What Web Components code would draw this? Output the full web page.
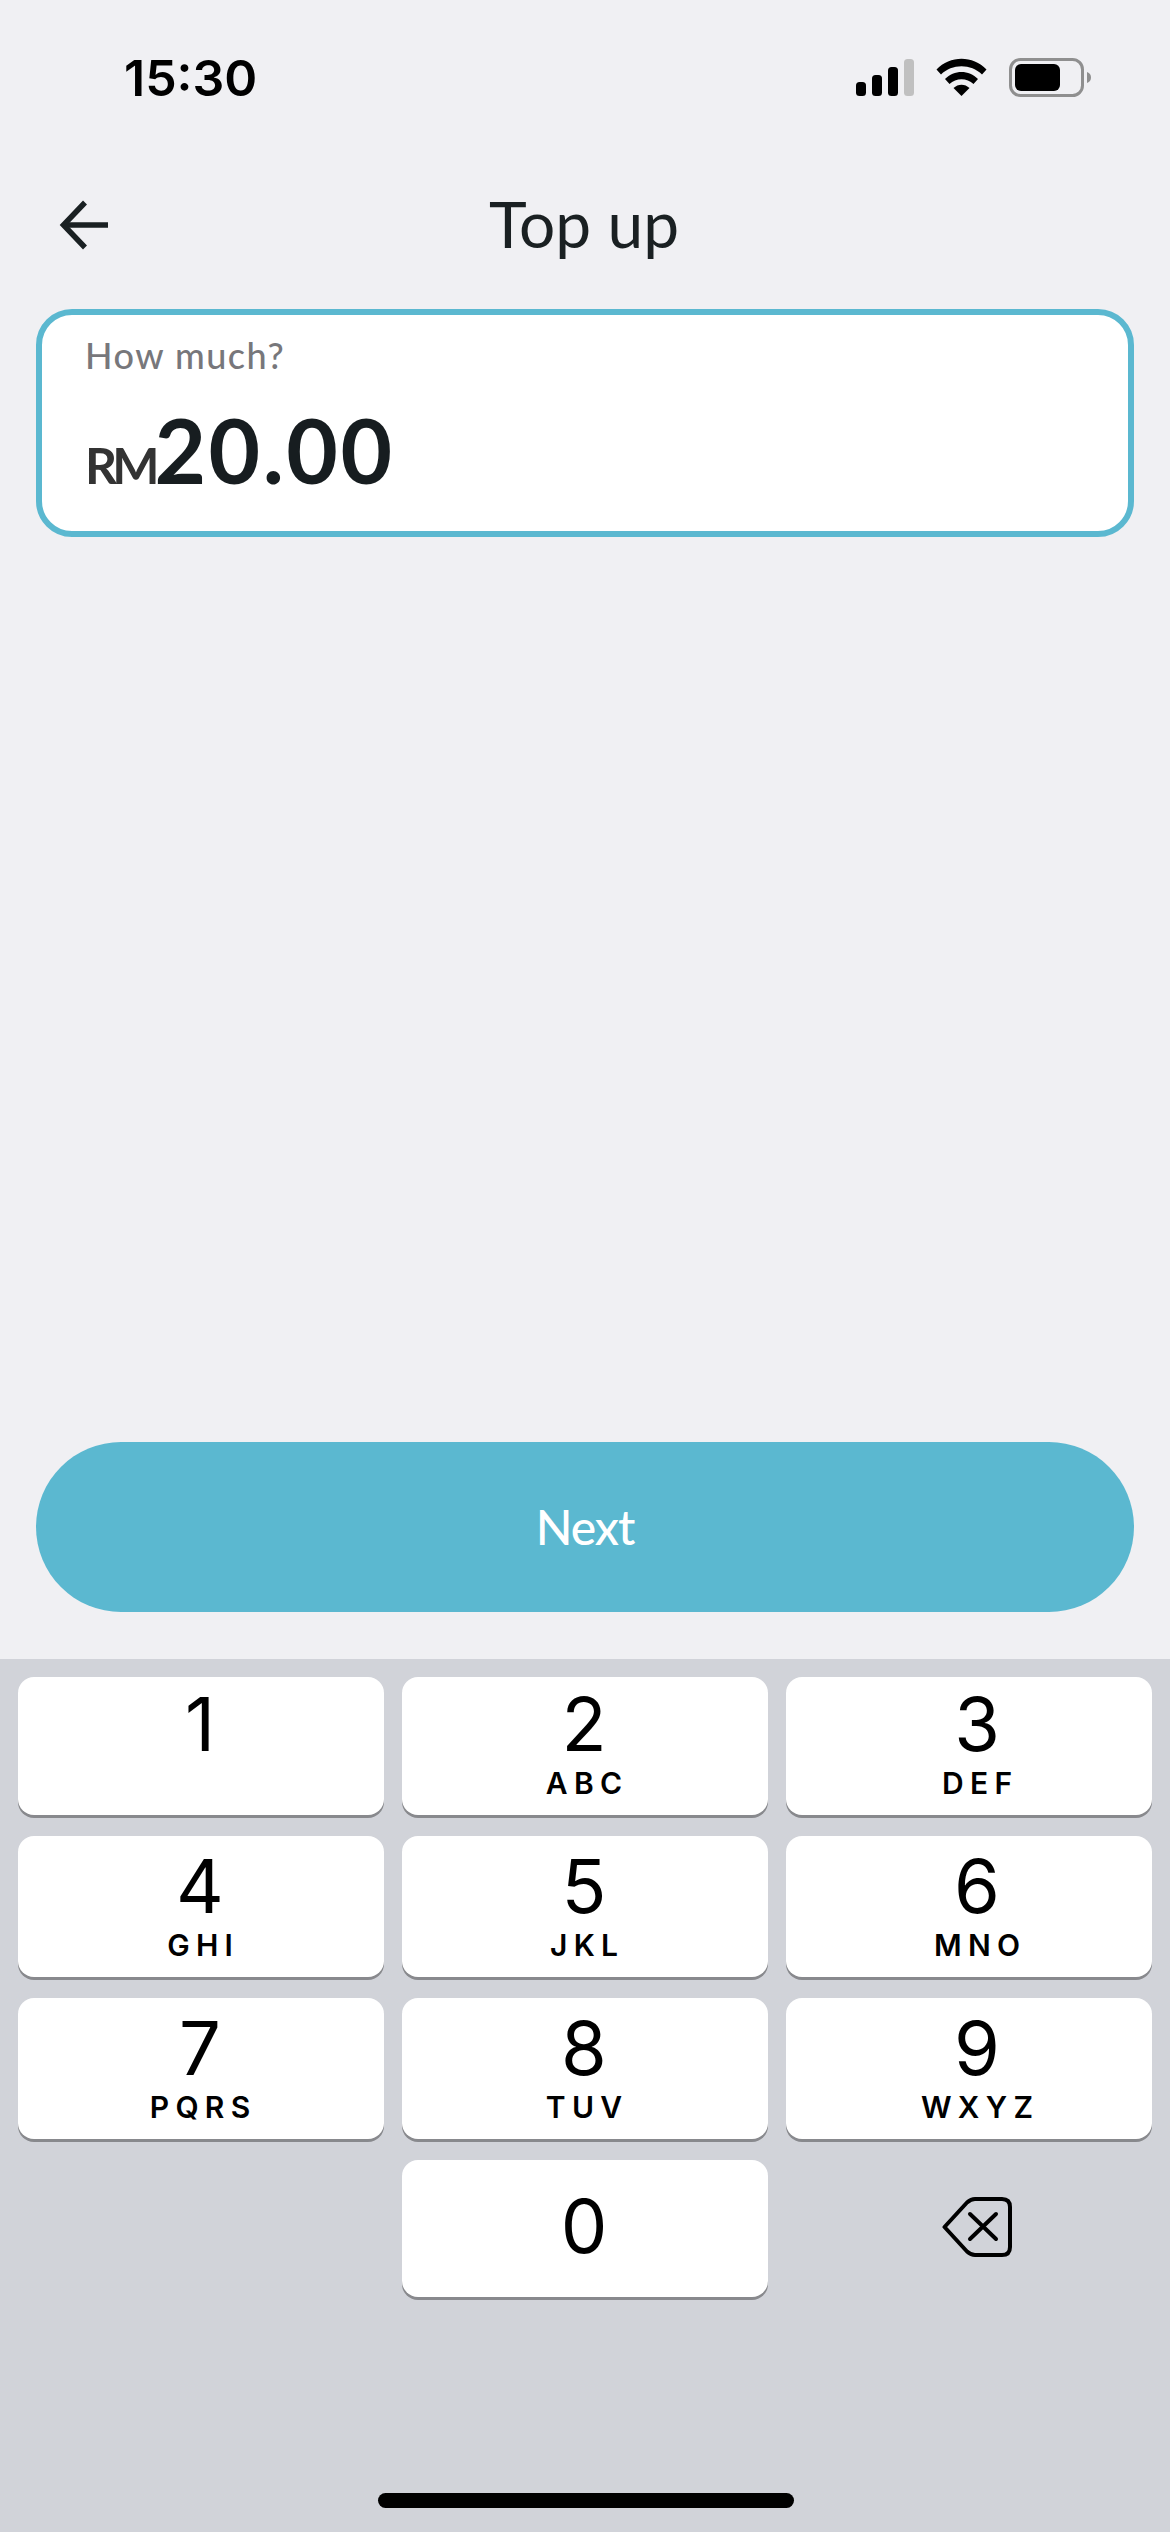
<!DOCTYPE html>
<html>
<head>
<meta charset="utf-8">
<style>
    html, body { margin: 0; padding: 0; background: #f0f0f3; }
</style>
</head>
<body>
<top-up-screen></top-up-screen>
<script>
class StatusBar extends HTMLElement {
    constructor(){
        super()
        this.attachShadow({mode: 'open'}).innerHTML = `
    <style>
        :host{ display: flex; justify-content: space-between; align-items: flex-start; height: 174px; box-sizing: border-box; padding: 53px 74px 0 124px; }
        .time{ font: 600 50px/50px Inter, sans-serif; color: #000; }
        svg{ display: block; margin-top: 4px; }
    </style>
    <div class="time">15:30</div>
    <svg width="240" height="42" viewBox="856 57 240 42">
        <rect x="856" y="82" width="10" height="14" rx="3.5"/>
        <rect x="872" y="75" width="10" height="21" rx="3.5"/>
        <rect x="888" y="67" width="10" height="29" rx="3.5"/>
        <rect x="904" y="59" width="10" height="37" rx="3.5" fill="#c0c0c0"/>
        <path d="M936.5 69.5C950 55 973 55 986.5 69.5L982 74.5C971 63.5 952 63.5 941 74.5Z"/>
        <path d="M945 79C954 69.5 969 69.5 978 79L973.5 84C967 77.5 956 77.5 949.5 84Z"/>
        <path d="M953.500 88C958 83.500 965 83.500 969.500 88L961.500 96Z"/>
        <rect x="1010.500" y="59.500" width="72" height="36" rx="10" fill="none" stroke="#8f8f8f" stroke-width="3"/>
        <rect x="1015" y="64" width="45" height="27" rx="6"/>
        <path d="M1087 72C1090 73 1091 75 1091 77.500S1090 82 1087 83Z" fill="#8f8f8f"/>
    </svg>`
    }
}

class NavBar extends HTMLElement {
    constructor(){
        super()
        this.attachShadow({mode: 'open'}).innerHTML = `
    <style>
        :host{ display: flex; align-items: flex-start; justify-content: center; position: relative; height: 135px; box-sizing: border-box; padding-top: 10px; }
        .title{ font: 400 64px/80px Lato, sans-serif; color: #1a2022; margin-left: -2px; }
        svg{ position: absolute; left: 59px; top: 25px; }
    </style>
    <svg width="52" height="52" viewBox="0 0 52 52" fill="none" stroke="#1a2022" stroke-width="5.5">
        <path d="M49 26H6"/><path d="M26 3.500L4.500 26L26 48.500"/>
    </svg>
    <div class="title"><slot></slot></div>`
    }
}

class AmountField extends HTMLElement {
    constructor(){
        super()
        this.attachShadow({mode: 'open'}).innerHTML = `
    <style>
        :host{ display: block; margin: 0 36px; height: 228px; box-sizing: border-box; background: #fff; border: 6px solid #5bb8d0; border-radius: 36px; padding: 17px 0 0 43px; }
        .label{ font: 500 36px/46px Lato, sans-serif; color: #77777b; letter-spacing: 1.5px; }
        .value{ display: flex; align-items: baseline; margin-top: 22px; color: #171d20; font: 700 89px/100px Lato, sans-serif; letter-spacing: 2.5px; }
        .cur{ font-size: 50px; color: #333; letter-spacing: -5px; }
    </style>
    <div class="label"><slot name="label"></slot></div>
    <div class="value"><span class="cur"><slot name="currency"></slot></span><span><slot></slot></span></div>`
    }
}

class NextButton extends HTMLElement {
    constructor(){
        super()
        this.attachShadow({mode: 'open'}).innerHTML = `
    <style>
        :host{ display: flex; align-items: center; justify-content: center; margin: 0 36px; height: 170px; border-radius: 85px; background: #5bb8d0; color: #fff; font: 500 48px/60px Lato, sans-serif; letter-spacing: -1px; }
    </style>
    <slot></slot>`
    }
}

class KeyButton extends HTMLElement {
    constructor(){
        super()
        this.attachShadow({mode: 'open'}).innerHTML = `
    <style>
        :host{ display: flex; flex-direction: column; align-items: center; justify-content: flex-end; box-sizing: border-box; background: #fff; border-radius: 16px; box-shadow: 0 3px 0 #88898d; padding: 0 2px 17px 0; color: #000; font-family: Inter, sans-serif; }
        :host([right]){ padding-left: 16px; padding-right: 0; }
        :host([solo]){ justify-content: center; padding-bottom: 5px; }
        :host([solo]) .letters{ display: none; }
        .digit{ font-size: 74px; line-height: 84px; font-weight: 380; }
        .letters{ min-height: 30px; margin-top: 2px; font-size: 30px; line-height: 30px; font-weight: 600; letter-spacing: 6.300px; margin-right: -6.300px; }
    </style>
    <div class="digit"><slot></slot></div>
    <div class="letters"><slot name="letters"></slot></div>`
    }
}

class NumberPad extends HTMLElement {
    constructor(){
        super()
        this.attachShadow({mode: 'open'}).innerHTML = `
    <style>
        :host{ display: block; position: relative; height: 873px; box-sizing: border-box; background: #d1d3d9; padding: 18px 18px 0; }
        .grid{ display: grid; grid-template-columns: repeat(3, 366px); grid-template-rows: 138px 141px 141px 137px; column-gap: 18px; row-gap: 21px; }
        .del{ display: flex; align-items: center; justify-content: center; padding-left: 15px; }
        .del svg{ display: block; margin-top: -4px; }
        .home{ position: absolute; left: 378px; top: 834px; width: 416px; height: 15px; border-radius: 8px; background: #000; }
    </style>
    <div class="grid">
        <key-button>1</key-button>
        <key-button>2<span slot="letters">ABC</span></key-button>
        <key-button right>3<span slot="letters">DEF</span></key-button>
        <key-button>4<span slot="letters">GHI</span></key-button>
        <key-button>5<span slot="letters">JKL</span></key-button>
        <key-button right>6<span slot="letters">MNO</span></key-button>
        <key-button>7<span slot="letters">PQRS</span></key-button>
        <key-button>8<span slot="letters">TUV</span></key-button>
        <key-button right>9<span slot="letters">WXYZ</span></key-button>
        <div></div>
        <key-button solo>0</key-button>
        <div class="del">
            <svg width="70" height="60" viewBox="0 0 70 60" fill="none" stroke="#000" stroke-width="4" stroke-linecap="round" stroke-linejoin="round">
                <path d="M2.500 30L25 5.500Q29 2 33 2H60Q68 2 68 10V50Q68 58 60 58H33Q29 58 25 54.500Z"/>
                <path d="M28 17L54 42M54 17L28 42"/>
            </svg>
        </div>
    </div>
    <div class="home"></div>`
    }
}

class TopUpScreen extends HTMLElement {
    constructor(){
        super()
        this.attachShadow({mode: 'open'}).innerHTML = `
    <style>
        :host{ display: flex; flex-direction: column; width: 1170px; height: 2532px; background: #f0f0f3; overflow: hidden; }
        .space{ flex: 1; }
        next-button{ margin-bottom: 47px; }
    </style>
    <status-bar></status-bar>
    <nav-bar>Top up</nav-bar>
    <amount-field>
        <span slot="label">How much?</span>
        <span slot="currency">RM</span>
        20.00
    </amount-field>
    <div class="space"></div>
    <next-button>Next</next-button>
    <number-pad></number-pad>`
    }
}

window.customElements.define('status-bar', StatusBar);
window.customElements.define('nav-bar', NavBar);
window.customElements.define('amount-field', AmountField);
window.customElements.define('next-button', NextButton);
window.customElements.define('key-button', KeyButton);
window.customElements.define('number-pad', NumberPad);
window.customElements.define('top-up-screen', TopUpScreen);
</script>
</body>
</html>
